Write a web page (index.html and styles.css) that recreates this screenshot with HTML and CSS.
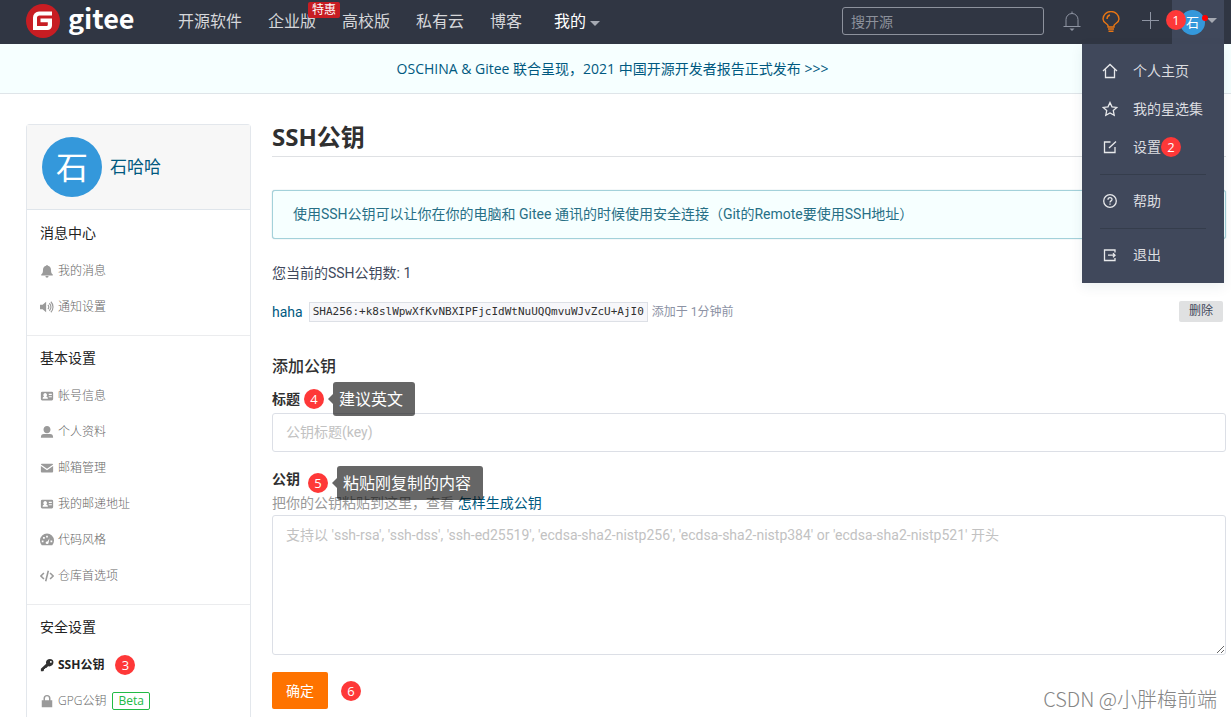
FILE: index.html
```html
<!DOCTYPE html>
<html lang="zh-CN">
<head>
<meta charset="utf-8">
<meta name="viewport" content="width=device-width, initial-scale=1">
<title>SSH公钥 - Gitee</title>
<link rel="stylesheet" href="styles.css">
</head>
<body>
<svg class="sprite" aria-hidden="true">
  <symbol id="i-bell-solid" viewBox="0 0 16 16"><path d="M8 1c.7 0 1 .5 1 1 2.400.5 3.600 2.300 3.600 5 0 2.600.6 3.800 2 5v1H1.400v-1c1.400-1.200 2-2.400 2-5C3.400 4.300 4.600 2.500 7 2c0-.5.300-1 1-1zM6.200 13.800h3.600a1.800 1.800 0 0 1-3.600 0z"/></symbol>
  <symbol id="i-volume" viewBox="0 0 16 16"><path d="M0 5.500h3L7 2v12l-4-3.500H0z"/><path d="M9 5.500a3.500 3.500 0 0 1 0 5M10.700 3.700a6 6 0 0 1 0 8.600M12.400 2a8.500 8.500 0 0 1 0 12" fill="none" stroke="currentColor" stroke-width="1.300"/></symbol>
  <symbol id="i-card" viewBox="0 0 16 16"><path fill-rule="evenodd" d="M2.500 3h11A1.500 1.500 0 0 1 15 4.500v7a1.500 1.500 0 0 1-1.500 1.500h-11A1.500 1.500 0 0 1 1 11.500v-7A1.500 1.500 0 0 1 2.500 3zM3 11h6c0-1.500-1-2.200-2-2.400a2.100 2.100 0 1 0-2.200 0C4 8.800 3 9.500 3 11zM10 5.500v1.300h3.500V5.500zm0 2.700v1.300h3.500V8.200z"/></symbol>
  <symbol id="i-user" viewBox="0 0 16 16"><path d="M8 1c2.400 0 4 1.800 4 4S10.400 9.400 8 9.400 4 7.200 4 5s1.600-4 4-4zM4.500 10.300h7c2.300 0 3.500 1.200 3.500 4.200H1c0-3 1.200-4.200 3.500-4.200z"/></symbol>
  <symbol id="i-mail" viewBox="0 0 16 16"><path d="M1 4c0-.7.400-1 1-1h12c.6 0 1 .3 1 1L8 8.800zM1 5.800l7 4.700 7-4.700v6.200c0 .6-.4 1-1 1H2c-.6 0-1-.4-1-1z"/></symbol>
  <symbol id="i-gauge" viewBox="0 0 16 16"><path fill-rule="evenodd" d="M2 14a8 8 0 1 1 12 0H2zm4.500-2.200a1.800 1.800 0 0 0 3.300-.8l1-5-2 3.500c-1.500-.1-2.500 1-2.300 2.300zM2 8.500v2h2v-2zm1.500-4v2h2v-2zM7 3v2h2V3zm5 5.500v2h2v-2z"/></symbol>
  <symbol id="i-code" viewBox="0 0 16 16"><path d="M4.500 4.500L1 8l3.500 3.500M11.500 4.500L15 8l-3.500 3.500M9.500 2l-3 12" fill="none" stroke="currentColor" stroke-width="1.800"/></symbol>
  <symbol id="i-key" viewBox="0 0 16 16"><path fill-rule="evenodd" d="M14.500 2.200C13 .6 9.800.6 8.100 2.200c-1.200 1.200-1.500 2.900-1 4.400L1 12.200V15h2.600l1-1v-1.300h1.300v-1.300h1.300l2-1.900c1.700.4 3.400.1 4.700-1.100 1.600-1.700 2.100-4.600.6-6.200zM11.500 3.500h1.800v1.900h-1.800z"/></symbol>
  <symbol id="i-lock" viewBox="0 0 16 16"><path fill-rule="evenodd" d="M4 7V5a4 4 0 0 1 8 0v2h2v8H2V7zm1.700 0h4.600V5a2.300 2.300 0 0 0-4.600 0z"/></symbol>
</svg>

<header class="topbar">
  <a class="logo" href="#">
    <svg class="logo-mark" viewBox="0 0 34 34" aria-hidden="true"><circle cx="17" cy="17" r="17" fill="#c71d23"/><path d="M26 7.500H13A6 6 0 0 0 7 13.500V26h14.500a4.500 4.500 0 0 0 4.500-4.500V14.500H14.500v3.700h7.300v2.300c0 1-.5 1.500-1.500 1.500H11v-8c0-1.800.8-2.600 2.600-2.600H26z" fill="#fff"/></svg>
    <span>gitee</span>
  </a>
  <nav class="nav">
    <a href="#">开源软件</a>
    <a href="#">企业版<span class="promo">特惠</span></a>
    <a href="#">高校版</a>
    <a href="#">私有云</a>
    <a href="#">博客</a>
    <a class="nav-mine" href="#">我的<span class="caret"></span></a>
  </nav>
  <input class="search" type="search" placeholder="搜开源" aria-label="搜开源">
  <div class="tools">
    <button type="button" aria-label="通知"><svg viewBox="0 0 22 22"><path d="M2.500 15.500h17M5 15.500V8.500a6 6 0 0 1 12 0v7M11 2.500V.5" fill="none" stroke="#8f95a3"/><path d="M8.500 17.500h5l-2.500 2.500z" fill="#8f95a3"/></svg></button>
    <button type="button" aria-label="灵感"><svg viewBox="0 0 22 22"><path d="M8 16v-1.500C7.500 12.500 3 12 3 8a8 7.500 0 0 1 16 0c0 4-4.500 4.500-5 6.500V16zM7 8c0-2 1-3.500 3-4" fill="none" stroke="#e87614" stroke-width="1.400"/><path d="M8 18h6M8.500 20.200h5" stroke="#e87614" stroke-width="1.400"/></svg></button>
    <button type="button" aria-label="新建"><svg viewBox="0 0 22 22"><path d="M3 9.500h17M11.500 1v17" stroke="#8f95a3" fill="none"/></svg></button>
  </div>
  <div class="account">
    <button class="account-toggle" type="button" aria-label="石哈哈"><span class="mini-avatar">石</span><span class="unread"></span><span class="caret"></span></button>
    <span class="step step-account">1</span>
    <div class="menu">
      <a href="#"><svg viewBox="0 0 16 16"><path d="M1 8l7-6.500L15 8M3.500 6.500v8h9v-8"/></svg>个人主页</a>
      <a href="#"><svg viewBox="0 0 16 16"><path d="M8 1.500l2 4.300 4.800.6-3.500 3.200.9 4.700L8 12l-4.200 2.300.9-4.700L1.200 6.400 6 5.800z"/></svg>我的星选集</a>
      <a href="#"><svg viewBox="0 0 16 16"><path d="M8.500 3H2.500v10.500h10.500V8M7 9l7-6.500"/></svg>设置<span class="step">2</span></a>
      <hr>
      <a href="#"><svg viewBox="0 0 16 16"><circle cx="8" cy="8" r="6.300"/><path d="M6 6.700C6 4 10 4 10 6.500c0 1.500-2 1.300-2 3M8 10.500v1.200"/></svg>帮助</a>
      <hr>
      <a href="#"><svg viewBox="0 0 16 16"><path d="M13 5.500V3H2.500v10.500H13V11M6 8.200h7M11 6.200l2 2-2 2"/></svg>退出</a>
    </div>
  </div>
</header>

<div class="banner"><a href="#">OSCHINA &amp; Gitee 联合呈现，2021 中国开源开发者报告正式发布 &gt;&gt;&gt;</a></div>

<div class="page">
  <aside class="sidebar">
    <div class="profile"><span class="avatar">石</span><a href="#">石哈哈</a></div>
    <section>
      <h2>消息中心</h2>
      <a href="#"><svg><use href="#i-bell-solid"/></svg>我的消息</a>
      <a href="#"><svg><use href="#i-volume"/></svg>通知设置</a>
    </section>
    <section>
      <h2>基本设置</h2>
      <a href="#"><svg><use href="#i-card"/></svg>帐号信息</a>
      <a href="#"><svg><use href="#i-user"/></svg>个人资料</a>
      <a href="#"><svg><use href="#i-mail"/></svg>邮箱管理</a>
      <a href="#"><svg><use href="#i-card"/></svg>我的邮递地址</a>
      <a href="#"><svg><use href="#i-gauge"/></svg>代码风格</a>
      <a href="#"><svg><use href="#i-code"/></svg>仓库首选项</a>
    </section>
    <section>
      <h2>安全设置</h2>
      <a class="current" href="#"><svg><use href="#i-key"/></svg>SSH公钥<span class="step">3</span></a>
      <a href="#"><svg><use href="#i-lock"/></svg>GPG公钥<span class="beta">Beta</span></a>
    </section>
  </aside>

  <main class="content">
    <h1>SSH公钥</h1>
    <div class="notice">使用SSH公钥可以让你在你的电脑和 Gitee 通讯的时候使用安全连接（Git的Remote要使用SSH地址）</div>
    <p class="count">您当前的SSH公钥数: 1</p>
    <div class="key-row">
      <a href="#">haha</a>
      <code>SHA256:+k8slWpwXfKvNBXIPFjcIdWtNuUQQmvuWJvZcU+AjI0</code>
      <span class="added">添加于 1分钟前</span>
      <button class="remove" type="button">删除</button>
    </div>
    <form>
      <h2>添加公钥</h2>
      <div class="label-row"><label for="title">标题</label><span class="marker"><span class="step">4</span><span class="tip">建议英文</span></span></div>
      <input class="field" id="title" type="text" placeholder="公钥标题(key)">
      <div class="label-row label-key"><label for="key">公钥</label><span class="marker marker-key"><span class="step">5</span><span class="tip">粘贴刚复制的内容</span></span></div>
      <p class="help">把你的公钥粘贴到这里，查看 <a href="#">怎样生成公钥</a></p>
      <textarea class="field" id="key" placeholder="支持以 'ssh-rsa', 'ssh-dss', 'ssh-ed25519', 'ecdsa-sha2-nistp256', 'ecdsa-sha2-nistp384' or 'ecdsa-sha2-nistp521' 开头"></textarea>
      <div class="actions"><button class="submit" type="submit">确定</button><span class="step">6</span></div>
    </form>
  </main>
</div>
<div class="watermark">CSDN @小胖梅前端</div>
</body>
</html>
```

FILE: styles.css
```css
* { box-sizing: border-box; }
body {
  margin: 0;
  min-height: 100vh;
  display: flex;
  flex-direction: column;
  position: relative;
  background: #fff;
  color: #40485b;
  font: 14px/20px "Open Sans", "Noto Sans CJK SC", sans-serif;
}
a { color: #005980; text-decoration: none; }
h1, h2, p { margin: 0; }
button, input, textarea { font: inherit; }
button { border: 0; padding: 0; background: none; cursor: pointer; }
.sprite { position: absolute; width: 0; height: 0; }

.step {
  display: inline-flex;
  flex: none;
  align-items: center;
  justify-content: center;
  width: 20px;
  height: 20px;
  border-radius: 50%;
  background: #fe3838;
  color: #fff;
  font-size: 13px;
  font-weight: 400;
}
.caret {
  border: 5px solid transparent;
  border-top-color: #a5a9b2;
  border-bottom: 0;
}

.topbar {
  display: flex;
  align-items: center;
  height: 44px;
  padding: 0 7px 0 26px;
  background: #303643;
}
.logo {
  display: flex;
  align-items: center;
  gap: 8px;
  width: 152px;
  padding-bottom: 2px;
  color: #fff;
  font: 700 27px/28px "Noto Sans CJK SC", sans-serif;
}
.logo span { padding-bottom: 6px; }
.logo-mark { width: 34px; height: 34px; }
.nav { display: flex; gap: 26px; flex: 1; padding-bottom: 2px; }
.nav a {
  position: relative;
  display: flex;
  align-items: center;
  color: #d6d7da;
  font-size: 16px;
  line-height: 24px;
  white-space: nowrap;
}
.nav .nav-mine { margin-left: 6px; gap: 4px; color: #fff; }
.nav-mine .caret { margin-top: 4px; }
.promo {
  position: absolute;
  left: 40px;
  top: -7px;
  padding: 0 4px;
  border-radius: 2px;
  background: #c71d23;
  color: #fff;
  font-size: 12px;
  line-height: 16px;
}
.search {
  width: 202px;
  height: 28px;
  margin-bottom: 2px;
  padding: 0 8px;
  border: 1px solid #8d929d;
  border-radius: 3px;
  background: transparent;
  color: #fff;
  outline: 0;
}
.search::placeholder { color: #8c919b; opacity: 1; }
.tools { display: flex; gap: 17px; margin: 0 11px 0 17px; }
.tools svg { display: block; width: 22px; height: 22px; }
.account { position: relative; align-self: stretch; width: 52px; background: #40485b; }
.account-toggle {
  position: relative;
  display: flex;
  align-items: center;
  gap: 2px;
  width: 100%;
  height: 100%;
  padding-left: 8px;
}
.account-toggle .caret { margin-bottom: 4px; }
.mini-avatar {
  width: 25px;
  height: 25px;
  border-radius: 50%;
  background: #3498db;
  color: #fff;
  font-size: 13px;
  line-height: 25px;
}
.unread {
  position: absolute;
  left: 30px;
  top: 15px;
  width: 6px;
  height: 6px;
  border-radius: 50%;
  background: #f00;
}
.step-account { position: absolute; left: -6px; top: 10px; }
.menu {
  position: absolute;
  z-index: 5;
  right: 0;
  top: 100%;
  width: 142px;
  padding: 8px 0 9px;
  background: #40485b;
  box-shadow: 0 4px 12px rgba(0, 60, 80, .08);
}
.menu a {
  display: flex;
  align-items: center;
  height: 38px;
  padding-left: 20px;
  color: #dcdde0;
  white-space: nowrap;
}
.menu svg {
  width: 16px;
  height: 16px;
  margin-right: 15px;
  fill: none;
  stroke: #e8e9eb;
  stroke-width: 1.3;
}
.menu hr { margin: 8px 18px 7px; border: 0; border-top: 1px solid #353d4c; }

.banner {
  display: flex;
  align-items: center;
  justify-content: center;
  height: 50px;
  padding-right: 6px;
  background: #f6ffff;
  border-bottom: 1px solid #dfe5e9;
}

.page {
  flex: 1;
  display: flex;
  gap: 21px;
  padding: 30px 5px 0 26px;
}
.sidebar {
  flex: none;
  width: 225px;
  border: solid #e3e7ec;
  border-width: 1px 1px 0;
  border-radius: 4px 4px 0 0;
}
.profile {
  display: flex;
  align-items: center;
  gap: 8px;
  height: 85px;
  margin-bottom: 1px;
  padding-left: 15px;
  border-bottom: 1px solid #dfe5eb;
  background: #f7f7f7;
  font-size: 17px;
}
.avatar {
  width: 60px;
  height: 60px;
  border-radius: 50%;
  background: #3498db;
  color: #fff;
  font-size: 32px;
  line-height: 60px;
  text-align: center;
}
.sidebar section { padding: 8px 0 10px 13px; border-bottom: 1px solid #ebecee; }
.sidebar section:last-child { padding-bottom: 0; border-bottom: 0; }
.sidebar h2 {
  margin-bottom: 6px;
  color: #222;
  font-size: 14px;
  font-weight: 400;
  line-height: 28px;
}
.sidebar section a {
  display: flex;
  align-items: center;
  height: 36px;
  color: #666;
  font-size: 12px;
  font-weight: 300;
}
.sidebar section svg { width: 14px; height: 14px; margin-right: 4px; color: #9a9a9a; fill: currentColor; }
.sidebar section .current { color: #222; font-weight: 700; }
.sidebar .current svg { color: #333; }
.sidebar .step { margin-left: 11px; }
.beta {
  margin-left: 6px;
  padding: 0 5px;
  border: 1px solid #21ba45;
  border-radius: 2px;
  color: #21ba45;
  font-weight: 400;
  line-height: 16px;
}

.content { flex: 1; min-width: 0; }
h1 {
  padding-bottom: 6px;
  border-bottom: 1px solid #dfe1e4;
  color: #303030;
  font-size: 24px;
  line-height: 26px;
}
.notice, .count, .key-row, .field {
  font-family: Roboto, "Noto Sans CJK SC", sans-serif;
}
.notice {
  margin-top: 33px;
  padding: 13px 20px 14px;
  border: 1px solid #a3d1da;
  border-radius: 3px;
  box-shadow: 0 0 1px #8fb9c4;
  background: #f6ffff;
  color: #276f86;
}
.count { margin-top: 24px; }
.key-row {
  display: flex;
  align-items: center;
  margin-top: 18px;
  padding-right: 3px;
}
code {
  margin: 0 4px 0 6px;
  padding: 0 3px;
  border: 1px solid #dde0e6;
  background: #f7f7fa;
  color: #303030;
  font: 11px/18px "DejaVu Sans Mono", monospace;
}
.added { color: #8c92a4; font-size: 12px; }
.remove {
  margin-left: auto;
  padding: 0 10px;
  border-radius: 2px;
  background: #e0e1e2;
  color: #40485b;
  font-size: 12px;
  line-height: 21px;
}
form h2 {
  margin-top: 32px;
  color: #303030;
  font-size: 16px;
  font-weight: 500;
  line-height: 24px;
}
.label-row { display: flex; align-items: center; height: 28px; margin-top: 7px; color: #303030; font-weight: 700; }
.label-key { margin-top: 13px; }
.marker { position: relative; display: flex; margin-left: 4px; }
.marker-key { margin: 8px 0 0 8px; }
.tip {
  position: absolute;
  z-index: 2;
  left: 29px;
  top: -7px;
  padding: 0 12px 0 6px;
  border-radius: 3px;
  background: rgba(0, 0, 0, .6);
  color: #fff;
  font-size: 16px;
  font-weight: 400;
  line-height: 34px;
  white-space: nowrap;
}
.tip::before {
  content: "";
  position: absolute;
  right: 100%;
  top: 12px;
  border: 5px solid transparent;
  border-right-color: rgba(0, 0, 0, .6);
  border-left: 0;
}
.field {
  display: block;
  width: 100%;
  height: 39px;
  padding: 8px 13px 10px;
  border: 1px solid #dcdfe6;
  border-radius: 3px;
  background: #fff;
  outline: 0;
}
.field::placeholder { color: #c2c2c2; opacity: 1; }
textarea.field { height: 140px; margin-top: 2px; padding-top: 9px; resize: both; }
.help { color: #999; }
.actions { display: flex; align-items: center; gap: 13px; margin-top: 17px; }
.submit {
  padding: 0 14px;
  border-radius: 2px;
  background: #fe7300;
  color: #fff;
  line-height: 37px;
}
.watermark {
  position: absolute;
  right: 14px;
  bottom: 5px;
  color: #858585;
  font: 300 20px/30px "Noto Sans CJK SC", sans-serif;
}
```
